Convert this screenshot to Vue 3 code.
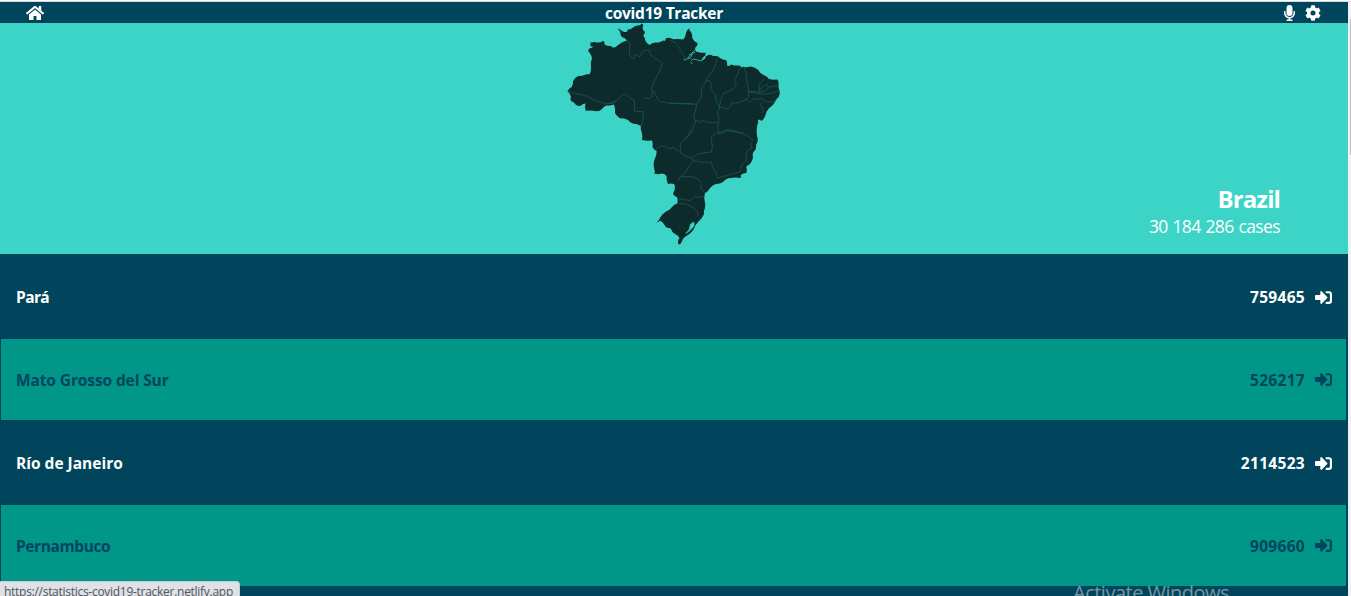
<script setup>
const rows = [
  { name: 'Pará', count: '759465', cls: 'para' },
  { name: 'Mato Grosso del Sur', count: '526217', cls: 'mato' },
  { name: 'Río de Janeiro', count: '2114523', cls: 'rio' },
  { name: 'Pernambuco', count: '909660', cls: 'pern' },
]

const coast = [
  [617.3, 28.7], [621.7, 30.7], [626.7, 32], [628, 29.5], [633.3, 27.3], [638, 25.6], [641.7, 23.4], [643.3, 25], [643, 30], [645, 33],
  [643.6, 36.5], [645, 40], [649.7, 45], [655, 42.5], [662, 41.3], [665, 41], [666, 38.3], [671, 38.3], [673.3, 39.3], [683.3, 39.6], [686, 33],
  [689.3, 28.3], [691, 32], [692.3, 38.3], [697.7, 43.3], [697, 46], [695, 49], [696, 51.5], [705.7, 52.7], [704, 57], [701.5, 60.5], [703, 60],
  [706, 56.3], [710.7, 54.7], [716, 56], [720, 58], [726, 60], [727, 65.5], [729.5, 66], [731, 64.6], [738, 65.5], [741, 67], [751, 66.5],
  [758.3, 70], [763.5, 75], [769, 78.9], [777.3, 79.5], [778.5, 84], [779.6, 91], [778.6, 97], [775, 102], [769, 108.3], [765.5, 115],
  [761.7, 121], [758, 119.8], [757.3, 125], [757, 136], [757.5, 141.7], [756, 148], [753.3, 152], [753, 158], [749, 165], [746.3, 167],
  [746.3, 173], [740.7, 175], [740.3, 178], [731, 178], [728.3, 178.3], [723, 182], [716, 184], [710, 188], [705, 193.3], [704.5, 200], [705, 208],
  [704, 214], [698.3, 221.7], [693.3, 230], [685.5, 236.5], [682, 241], [679, 244.8], [678, 243], [679.5, 238], [675, 234], [671, 229], [668, 228],
  [664.5, 225], [660, 220.6], [656.5, 222.3], [660, 217.7], [666, 211.5], [672, 207], [677.3, 203.5], [677, 197], [673, 193.8], [675, 186],
  [674, 184], [668, 184], [666.5, 176], [662, 173.5], [654.5, 173.7], [654, 168], [654.3, 160], [656.7, 151], [652.5, 147], [652, 140.5],
  [642, 140], [641.6, 132], [641, 126], [633, 123.5], [628, 120], [620, 118.3], [615, 113], [614, 104.5], [606.7, 105.5], [602, 109],
  [596.7, 111.3], [585.7, 110.7], [585.5, 103.5], [581, 105.7], [576, 105], [571, 101], [571, 97], [567.5, 91.3], [571.7, 87], [573, 81],
  [578.3, 76], [586, 74.5], [589.5, 74.5], [591, 67], [592, 58], [588.5, 51.5], [589.5, 48.5], [593.5, 46], [590.2, 46], [590, 42.7],
  [598, 42.5], [603.3, 40.7], [604.5, 44.5], [610, 46], [613, 47.8], [618, 45], [627, 40.5], [622, 37], [620.5, 33.2],
]

// Small alternating offsets along every stretch keep the coastline uneven.
const points = coast.flatMap(([x, y], i) => {
  const [nx, ny] = coast[(i + 1) % coast.length]
  const length = Math.hypot(nx - x, ny - y)
  if (length < 3) return [[x, y]]
  const push = i % 2 ? 0.6 : -0.6
  return [[x, y], [(x + nx) / 2 - ((ny - y) / length) * push, (y + ny) / 2 + ((nx - x) / length) * push]]
})
const land = 'M' + points.map((p) => p.map((n) => n.toFixed(1)).join(' ')).join('L') + 'Z'
</script>

<template>
  <div class="window">
    <div class="page">
      <header class="bar">
        <svg class="home" viewBox="0 0 576 512"><path d="M280.4 148.3 96 300.1V464a16 16 0 0 0 16 16l112-.3a16 16 0 0 0 16-16V368a16 16 0 0 1 16-16h64a16 16 0 0 1 16 16v95.6a16 16 0 0 0 16 16.1L464 480a16 16 0 0 0 16-16V300L295.700 148.300a12.200 12.200 0 0 0-15.300 0zM571.600 251.500 488 182.600V44a12 12 0 0 0-12-12h-56a12 12 0 0 0-12 12v72.600L318.500 43a48 48 0 0 0-61 0L4.300 251.500a12 12 0 0 0-1.600 16.900l25.500 31a12 12 0 0 0 16.900 1.600l235.300-193.700a12.200 12.200 0 0 1 15.300 0L530.900 301a12 12 0 0 0 16.900-1.600l25.500-31a12 12 0 0 0-1.700-16.900z" /></svg>
        <h1 class="title">covid19 Tracker</h1>
        <div class="tools">
          <svg class="mic" viewBox="0 0 352 512"><path d="M176 352a96 96 0 0 0 96-96V96a96 96 0 0 0-192 0v160a96 96 0 0 0 96 96zM336 192h-16a16 16 0 0 0-16 16v48c0 74.800-64.500 134.800-140.800 127.400C96.700 376.900 48 317.100 48 250.300V208a16 16 0 0 0-16-16H16a16 16 0 0 0-16 16v40.200c0 89.600 64 169.500 152 181.700V464H96a16 16 0 0 0-16 16v16a16 16 0 0 0 16 16h160a16 16 0 0 0 16-16v-16a16 16 0 0 0-16-16h-56v-33.800C285.700 418.500 352 344.900 352 256v-48a16 16 0 0 0-16-16z" /></svg>
          <svg class="gear" viewBox="0 0 512 512"><path d="M487.400 315.700l-42.600-24.600c4.300-23.200 4.300-47 0-70.200l42.600-24.600c4.900-2.800 7.100-8.600 5.500-14-11.100-35.600-30-67.800-54.700-94.600-3.800-4.100-10-5.100-14.800-2.300L380.800 110c-17.900-15.400-38.500-27.300-60.800-35.100V25.800c0-5.600-3.900-10.500-9.400-11.700-36.700-8.200-74.300-7.800-109.200 0-5.500 1.200-9.400 6.100-9.400 11.700V75c-22.200 7.900-42.800 19.800-60.800 35.100L88.700 85.500c-4.900-2.800-11-1.900-14.800 2.300-24.700 26.700-43.600 58.900-54.700 94.600-1.700 5.400.6 11.200 5.500 14L67.300 221c-4.300 23.200-4.300 47 0 70.200l-42.600 24.600c-4.900 2.800-7.100 8.600-5.500 14 11.100 35.600 30 67.800 54.700 94.600 3.800 4.100 10 5.100 14.800 2.300l42.600-24.600c17.900 15.400 38.500 27.300 60.800 35.100v49.200c0 5.600 3.900 10.500 9.400 11.700 36.700 8.200 74.300 7.800 109.200 0 5.500-1.200 9.400-6.100 9.400-11.700v-49.200c22.200-7.900 42.800-19.800 60.800-35.100l42.600 24.600c4.900 2.800 11 1.900 14.800-2.300 24.700-26.700 43.600-58.900 54.700-94.600 1.500-5.500-.7-11.300-5.600-14.100zM256 336a80 80 0 1 1 0-160 80 80 0 0 1 0 160z" /></svg>
        </div>
      </header>

      <section class="hero">
        <svg class="map" viewBox="565 23 218 224">
          <path class="land" :d="land" />
          <g class="borders">
            <path transform="translate(555 20) scale(.3333)" d="M219 61L224 73 223 103 230 115 238 115 239 104 247 105 251 111 258 108 260 97 268 91 284 90 284 101 300 115 323 130 310 160 296 188 289 207 292 214 292 230 283 235 266 235M295 212L303 225 308 239 318 246 340 249 417 251M38 213L54 218 97 229 120 241 153 253 176 245 190 240 199 228 208 222 216 225 227 236 238 240 239 274 265 275 265 285 262 310 258 320M153 250L177 251 182 243" />
            <path transform="translate(670 20) scale(.3333)" d="M0 61L19 69 31 89 42 106 45 118M0 250L80 253M144 112L137 132 128 154 115 168 106 187 95 204 94 229 80 253 76 275 71 290 76 306 69 324 46 358M108 183L119 181 124 195 122 209 136 223 139 243 148 262 143 280 147 297 143 319 146 340M75 301L91 306 99 301 112 308 143 307M148 263L152 241 160 221 189 208 199 193 193 178 204 163 206 150 221 140 228 157 231 185 236 213 235 232 225 240 200 249 185 249 183 258 171 268 158 262 148 262M236 213L269 216 289 211 299 200 327 198M269 216L267 195 281 177M269 210L279 198 292 193 295 203M236 215L250 218 281 222 301 220 327 212M225 235L239 247 253 235 264 238 278 236 286 246 308 246 322 236M275 246L273 258 280 270 276 280M147 342L159 338 177 329 202 335 217 343" />
            <path transform="translate(630 130) scale(.3333)" d="M78 57L89 50 102 47 115 56 130 53 143 60 152 70M188 0L180 12 163 28 150 45 153 68 165 78 186 85 200 74 212 70 244 66 247 50 244 20 260 10 275 5 290 0 310 5 335 8 355 20 368 30 362 42 366 55 355 60 348 75 350 92 335 105 330 125 310 132 285 138 262 145 258 125 247 112 245 97 215 97 190 92 180 105 170 120 165 130 150 141 145 153M186 84L190 93M150 141L185 140 205 147 212 160 214 178 225 188M142 205L160 208 180 212 195 200 205 202 225 198M147 220L170 223 190 233 205 248 203 260" />
          </g>
          <g class="water">
            <path d="M683.500 60l3.500-.5 3-4 3.500-4 3-3M687.500 57l1.500 2 2-2 1.500-4 3-.5M691 60.500l2.500-1.500 8 2 3-5M689 55l3-1M691 62l1 2" />
            <path class="lagoon" d="M686 233.500L689.500 229 690.500 224 694 222 694 226 690.500 230z" />
          </g>
        </svg>
        <div class="summary">
          <h2>Brazil</h2>
          <p>30 184 286 cases</p>
        </div>
      </section>

      <ul class="list">
        <li v-for="row in rows" :key="row.name" class="row">
          <span class="name" :class="row.cls">{{ row.name }}</span>
          <span class="count">{{ row.count }}</span>
          <svg class="enter" viewBox="0 0 512 512"><path d="M416 448h-84a12 12 0 0 1-12-12v-40a12 12 0 0 1 12-12h84a32 32 0 0 0 32-32V160a32 32 0 0 0-32-32h-84a12 12 0 0 1-12-12V76a12 12 0 0 1 12-12h84a96 96 0 0 1 96 96v192a96 96 0 0 1-96 96zm-47-209L201 71c-15-15-41-4.500-41 17v96H24a24 24 0 0 0-24 24v96a24 24 0 0 0 24 24h136v96c0 21.500 26 32 41 17l168-168a24 24 0 0 0 0-34z" /></svg>
        </li>
      </ul>
    </div>
    <div class="scroll"><div class="thumb"></div></div>
    <div class="status">https://statistics-covid19-tracker.netlify.app</div>
    <div class="watermark">Activate Windows</div>
  </div>
</template>

<style>
body { margin: 0; overflow: hidden; }
</style>

<style scoped>
.window { position: relative; display: flex; box-sizing: border-box; width: 1351px; height: 596px; overflow: hidden; border-top: 1px solid #fff; background: #f1f1f1; font-family: "Open Sans", "Noto Sans", sans-serif; color: #fff; }
.window::before { content: ""; position: absolute; left: 0; top: 0; width: 100%; height: 1px; background: #d5dae0; }
.page { width: 1348px; padding-top: 1px; }
.bar { display: grid; grid-template-columns: 80px auto 80px; align-items: center; justify-content: space-between; box-sizing: border-box; height: 21px; padding: 0 27px 0 26px; background: #00455c; }
svg { fill: currentColor; display: block; }
.home { width: 18px; height: 16px; }
.title { margin: 0; padding: 2px 19px 0 0; font-size: 15.500px; line-height: 19px; font-weight: 700; letter-spacing: -.25px; white-space: nowrap; }
.tools { display: flex; justify-content: flex-end; gap: 10px; }
.mic { width: 11px; height: 16px; }
.gear { width: 16px; height: 16px; }
.hero { position: relative; height: 231px; background: #3bd4c7; }
.map { position: absolute; left: 565px; top: 0; width: 218px; height: 224px; }
.land { fill: #0d2b2a; }
.borders { fill: none; stroke: #1d5a52; stroke-width: 2.200; }
.water { fill: none; stroke: #36bfb3; stroke-width: .8; }
.lagoon { fill: #3bd4c7; }
.summary { position: absolute; right: 68px; top: 159px; text-align: right; white-space: nowrap; }
.summary h2 { margin: 0; font-size: 24px; line-height: 33px; letter-spacing: -.9px; }
.summary p { margin: 0; font-size: 17.500px; line-height: 22px; letter-spacing: -.6px; word-spacing: .8px; }
.list { margin: 0; padding: 0; list-style: none; height: 342px; background: #00455c; }
.row { display: flex; align-items: center; box-sizing: border-box; height: 85px; padding: 1px 16px 0; font-size: 15.500px; font-weight: 700; white-space: nowrap; }
.row:nth-child(even) { height: 81px; margin: 0 2px 0 1px; padding: 0 14px 0 15px; background: #009688; color: #00455c; }
.para { letter-spacing: -.6px; }
.mato { letter-spacing: -.11px; }
.pern { letter-spacing: -.4px; }
.count { margin-left: auto; margin-right: 10px; letter-spacing: .3px; }
.enter { width: 17px; height: 17px; }
.scroll { position: relative; width: 3px; }
.thumb { margin: 18px 0 0 2px; width: 1px; height: 136px; background: #c1c1c1; }
.status { position: absolute; left: 0; top: 580px; height: 20px; border: 1px solid #c9ccd1; border-left: 0; border-radius: 0 4px 0 0; box-sizing: border-box; width: 240px; padding-left: 4px; background: #dee1e6; color: #50555b; font-size: 12px; line-height: 20px; letter-spacing: -.28px; white-space: nowrap; }
.watermark { position: absolute; left: 1073px; top: 578px; color: #7697a2; font-size: 20px; line-height: 27px; letter-spacing: -.5px; white-space: nowrap; }
</style>
